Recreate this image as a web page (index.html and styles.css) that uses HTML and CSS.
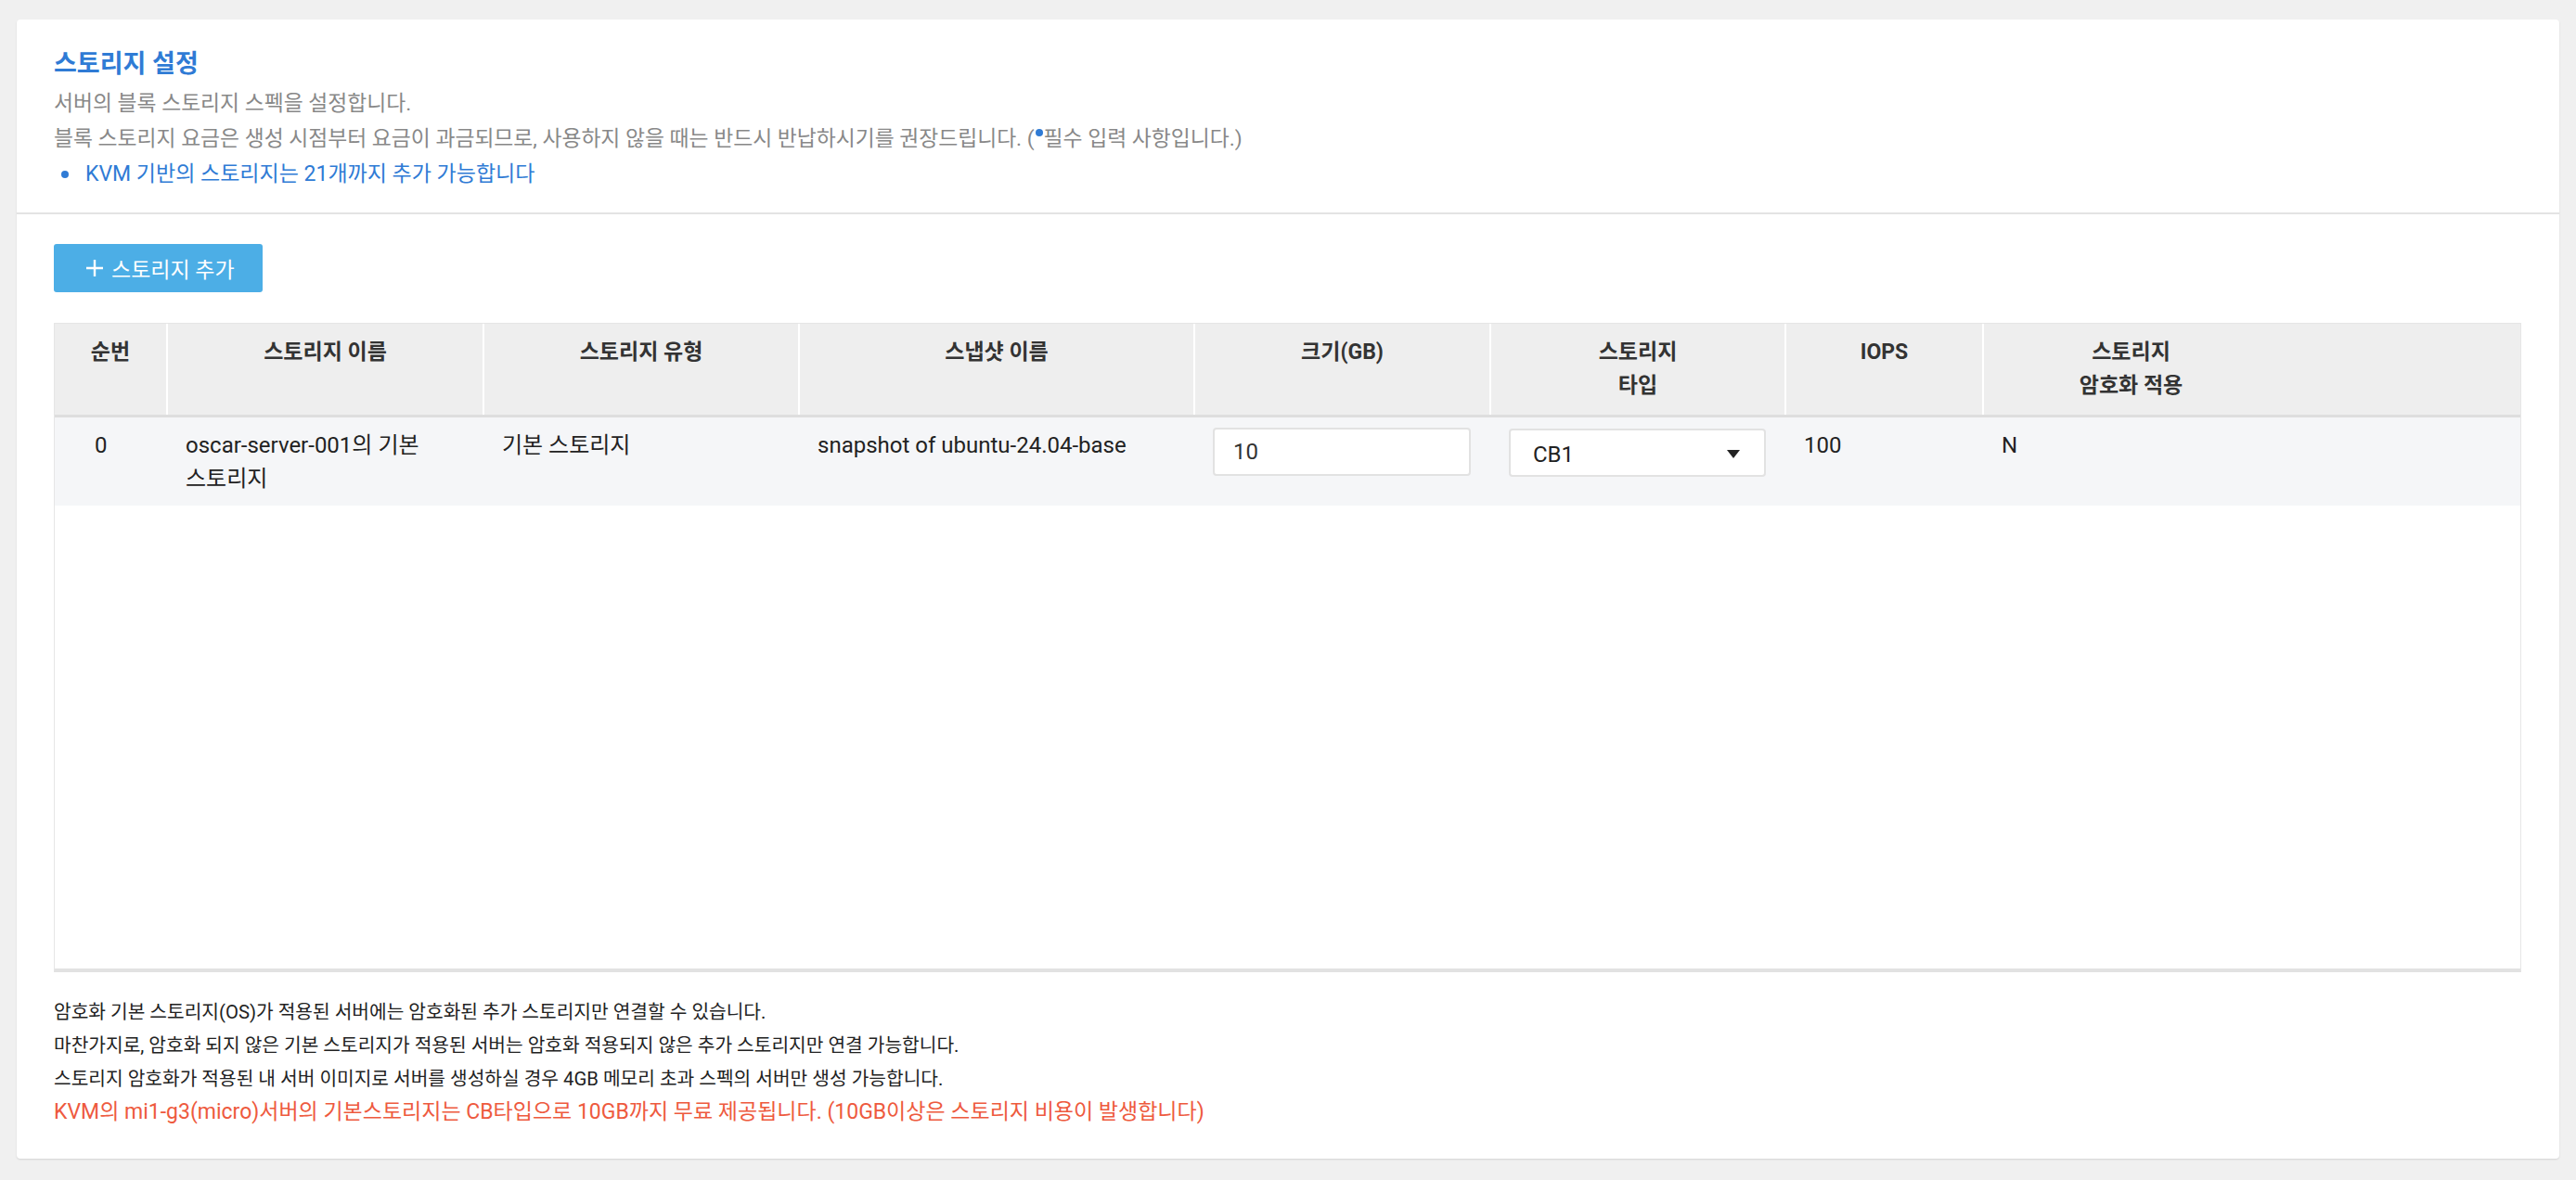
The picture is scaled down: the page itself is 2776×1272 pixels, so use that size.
FILE: index.html
```html
<!DOCTYPE html>
<html lang="ko">
<head>
    <meta charset="UTF-8">
    <meta name="viewport" content="width=device-width, initial-scale=1.0">
    <title>스토리지 설정</title>
    <link rel="stylesheet" href="styles.css">
</head>
<body>
    <div class="card">
        <div class="card-head">
            <h2 class="title">스토리지 설정</h2>
            <p class="desc">서버의 블록 스토리지 스펙을 설정합니다.</p>
            <p class="desc">블록 스토리지 요금은 생성 시점부터 요금이 과금되므로, 사용하지 않을 때는 반드시 반납하시기를 권장드립니다. (<span class="req-dot"></span>필수 입력 사항입니다.)</p>
            <ul class="info-list">
                <li>KVM 기반의 스토리지는 21개까지 추가 가능합니다</li>
            </ul>
        </div>
        <div class="card-body">
            <button class="btn-add">
                <svg width="20" height="20" viewBox="0 0 20 20"><path d="M10 1v18M1 10h18" stroke="#fff" stroke-width="2.4" fill="none"/></svg>
                스토리지 추가
            </button>

            <div class="table-wrap">
                <table class="storage-table">
                    <colgroup>
                        <col style="width:121px">
                        <col style="width:341px">
                        <col style="width:340px">
                        <col style="width:426px">
                        <col style="width:319px">
                        <col style="width:318px">
                        <col style="width:213px">
                        <col style="width:318px">
                        <col>
                    </colgroup>
                    <thead>
                        <tr>
                            <th>순번</th>
                            <th>스토리지 이름</th>
                            <th>스토리지 유형</th>
                            <th>스냅샷 이름</th>
                            <th>크기(GB)</th>
                            <th>스토리지<br>타입</th>
                            <th>IOPS</th>
                            <th>스토리지<br>암호화 적용</th>
                            <th class="filler"></th>
                        </tr>
                    </thead>
                    <tbody>
                        <tr>
                            <td class="num">0</td>
                            <td>oscar-server-001의 기본<br>스토리지</td>
                            <td>기본 스토리지</td>
                            <td>snapshot of ubuntu-24.04-base</td>
                            <td><input class="field" type="text" value="10"></td>
                            <td>
                                <div class="select">
                                    <span>CB1</span>
                                    <svg width="14" height="9" viewBox="0 0 14 9"><path d="M0 0h14L7 9z" fill="#222"/></svg>
                                </div>
                            </td>
                            <td>100</td>
                            <td>N</td>
                            <td></td>
                        </tr>
                    </tbody>
                </table>
            </div>

            <div class="notes">
                <p>암호화 기본 스토리지(OS)가 적용된 서버에는 암호화된 추가 스토리지만 연결할 수 있습니다.</p>
                <p>마찬가지로, 암호화 되지 않은 기본 스토리지가 적용된 서버는 암호화 적용되지 않은 추가 스토리지만 연결 가능합니다.</p>
                <p>스토리지 암호화가 적용된 내 서버 이미지로 서버를 생성하실 경우 4GB 메모리 초과 스펙의 서버만 생성 가능합니다.</p>
                <p class="warn">KVM의 mi1-g3(micro)서버의 기본스토리지는 CB타입으로 10GB까지 무료 제공됩니다. (10GB이상은 스토리지 비용이 발생합니다)</p>
            </div>
        </div>
    </div>
</body>
</html>
```

FILE: styles.css
```css
body {
    margin: 0;
    background-color: #f0f0f0;
    font-family: Roboto, "Noto Sans CJK KR", sans-serif;
    color: #222;
    padding: 21px 18px 23px;
}
.card {
    background-color: #fff;
    border-radius: 4px;
    box-shadow: 0 1px 2px rgba(0, 0, 0, 0.12);
}
.card-head {
    padding: 29px 40px 22px;
    border-bottom: 2px solid #e3e3e3;
}
.title {
    margin: 0 0 5px;
    font-size: 27px;
    line-height: 38px;
    font-weight: bold;
    color: #2f7bd5;
}
.desc {
    margin: 0;
    font-size: 22.8px;
    line-height: 38px;
    color: #888;
}
.req-dot {
    display: inline-block;
    width: 8px;
    height: 8px;
    border-radius: 50%;
    background-color: #2f7bd5;
    vertical-align: 10px;
    margin: 0 1px;
}
.info-list {
    margin: 0;
    padding: 0 0 0 34px;
    list-style: none;
    font-size: 23px;
    line-height: 38px;
    color: #2f7bd5;
}
.info-list li {
    position: relative;
}
.info-list li::before {
    content: "";
    position: absolute;
    left: -26px;
    top: 15px;
    width: 8px;
    height: 8px;
    border-radius: 50%;
    background-color: #2f7bd5;
}
.card-body {
    padding: 32px 41px 32px 40px;
}
.btn-add {
    display: flex;
    align-items: center;
    gap: 8px;
    height: 52px;
    padding: 0 30px 0 34px;
    background-color: #4caee6;
    color: #fff;
    border: none;
    border-radius: 3px;
    font-family: inherit;
    font-size: 23px;
    cursor: pointer;
}
.table-wrap {
    margin-top: 33px;
    height: 695px;
    border: 1px solid #e6e6e6;
    border-bottom: 4px solid #e2e2e2;
}
.storage-table {
    width: 100%;
    table-layout: fixed;
    border-collapse: collapse;
    font-size: 24px;
}
.storage-table th {
    background-color: #eeeeee;
    border-left: 2px solid #fff;
    border-bottom: 3px solid #dedede;
    height: 99px;
    padding: 13px 10px 0;
    box-sizing: border-box;
    vertical-align: top;
    font-size: 23px;
    line-height: 36px;
    font-weight: bold;
    color: #333;
}
.storage-table th:first-child,
.storage-table th.filler {
    border-left: none;
}
.storage-table td {
    background-color: #f5f6f8;
    height: 97px;
    padding: 12px 20px 0;
    box-sizing: border-box;
    vertical-align: top;
    line-height: 36px;
}
.storage-table td.num {
    padding-left: 43px;
}
.field {
    display: block;
    width: 278px;
    height: 52px;
    margin-top: -1px;
    box-sizing: border-box;
    border: 2px solid #e2e2e2;
    border-radius: 4px;
    padding: 0 20px;
    font-family: inherit;
    font-size: 24px;
    color: #333;
    background-color: #fff;
}
.select {
    display: flex;
    align-items: center;
    justify-content: space-between;
    width: 277px;
    height: 52px;
    box-sizing: border-box;
    border: 2px solid #e2e2e2;
    border-radius: 4px;
    padding: 4px 26px 0 24px;
    background-color: #fff;
}
.notes {
    margin-top: 25px;
}
.notes p {
    margin: 0;
    font-size: 20.3px;
    line-height: 36px;
}
.notes .warn {
    font-size: 23px;
    color: #ee5a3e;
}
```
